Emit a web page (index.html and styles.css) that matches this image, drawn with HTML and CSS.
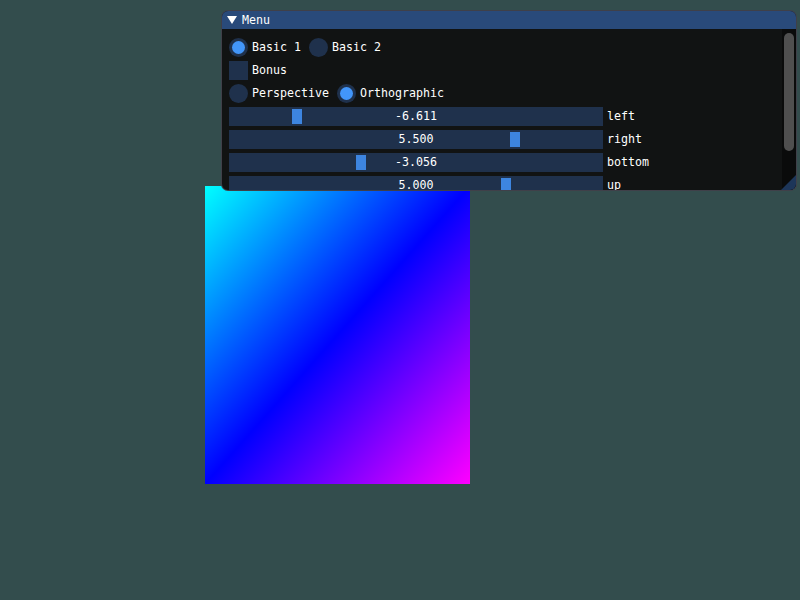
FILE: index.html
```html
<!DOCTYPE html>
<html>
<head>
<meta charset="utf-8">
<link rel="stylesheet" href="styles.css">
</head>
<body>
<div class="quad"></div>
<div class="window">
  <div class="titlebar">
    <svg class="arrow" width="10" height="8" viewBox="0 0 10 8"><polygon points="0,0 10,0 5,8" fill="#fff"/></svg>
    <span class="title">Menu</span>
  </div>
  <div class="body">
    <div class="content">
      <div class="row">
        <span class="radio on"></span><span class="label">Basic 1</span>
        <span class="radio sep"></span><span class="label">Basic 2</span>
      </div>
      <div class="row">
        <span class="check"></span><span class="label">Bonus</span>
      </div>
      <div class="row">
        <span class="radio"></span><span class="label">Perspective</span>
        <span class="radio on sep"></span><span class="label">Orthographic</span>
      </div>
      <div class="row">
        <div class="slider"><span class="grab" style="left:63px"></span><span class="value">-6.611</span></div><span class="label">left</span>
      </div>
      <div class="row">
        <div class="slider"><span class="grab" style="left:281px"></span><span class="value">5.500</span></div><span class="label">right</span>
      </div>
      <div class="row">
        <div class="slider"><span class="grab" style="left:127px"></span><span class="value">-3.056</span></div><span class="label">bottom</span>
      </div>
      <div class="row">
        <div class="slider"><span class="grab" style="left:272px"></span><span class="value">5.000</span></div><span class="label">up</span>
      </div>
    </div>
    <div class="scrollbar"><div class="sgrab"></div></div>
  </div>
  <div class="grip"></div>
</div>
</body>
</html>
```
FILE: styles.css
```css
html, body {
  margin: 0;
  padding: 0;
  background: #334d4d;
  width: 800px;
  height: 600px;
  overflow: hidden;
  font-family: "DejaVu Sans Mono", "Liberation Mono", monospace;
  font-size: 11.63px;
  color: #ffffff;
}

.quad {
  position: absolute;
  left: 205px;
  top: 186px;
  width: 265px;
  height: 298px;
  background: linear-gradient(to bottom right, #00ffff 0%, #0000ff 50%, #ff00ff 100%);
}

.window {
  position: absolute;
  left: 221px;
  top: 10px;
  width: 576px;
  height: 181px;
  box-sizing: border-box;
  border: 1px solid rgba(110, 110, 128, 0.5);
  border-radius: 7px;
  background: #111313;
  overflow: hidden;
  display: flex;
  flex-direction: column;
}

.titlebar {
  height: 18px;
  flex: none;
  background: #294a7a;
  display: flex;
  align-items: center;
  padding-left: 5px;
  gap: 5px;
  line-height: 18px;
}

.arrow {
  display: block;
  margin-top: -1px;
}

.body {
  flex: 1;
  display: flex;
  min-height: 0;
}

.content {
  flex: 1;
  padding: 9px 7px 0 7px;
  display: flex;
  flex-direction: column;
  gap: 4px;
  overflow: hidden;
}

.row {
  height: 19px;
  flex: none;
  display: flex;
  align-items: center;
  gap: 4px;
  line-height: 19px;
  white-space: nowrap;
}

.radio {
  width: 19px;
  height: 19px;
  border-radius: 50%;
  background: #1f314c;
  display: flex;
  align-items: center;
  justify-content: center;
  flex: none;
}

.radio.sep {
  margin-left: 4px;
}

.radio.on::after {
  content: "";
  width: 13px;
  height: 13px;
  border-radius: 50%;
  background: #4296fa;
}

.check {
  width: 19px;
  height: 19px;
  background: #1f314c;
  flex: none;
}

.slider {
  position: relative;
  width: 374px;
  height: 19px;
  background: #1f314c;
  flex: none;
  text-align: center;
}

.grab {
  position: absolute;
  top: 2px;
  width: 10px;
  height: 15px;
  background: #3d85e0;
}

.value {
  position: relative;
}

.scrollbar {
  width: 14px;
  flex: none;
  background: #0a0b0b;
  padding: 4px 2px 0 2px;
  box-sizing: border-box;
}

.sgrab {
  width: 10px;
  height: 118px;
  border-radius: 5px;
  background: #4f4f4f;
}

.grip {
  position: absolute;
  right: 0;
  bottom: 0;
  width: 15px;
  height: 15px;
  background: #1d3659;
  clip-path: polygon(100% 0, 100% 100%, 0 100%);
}
```
